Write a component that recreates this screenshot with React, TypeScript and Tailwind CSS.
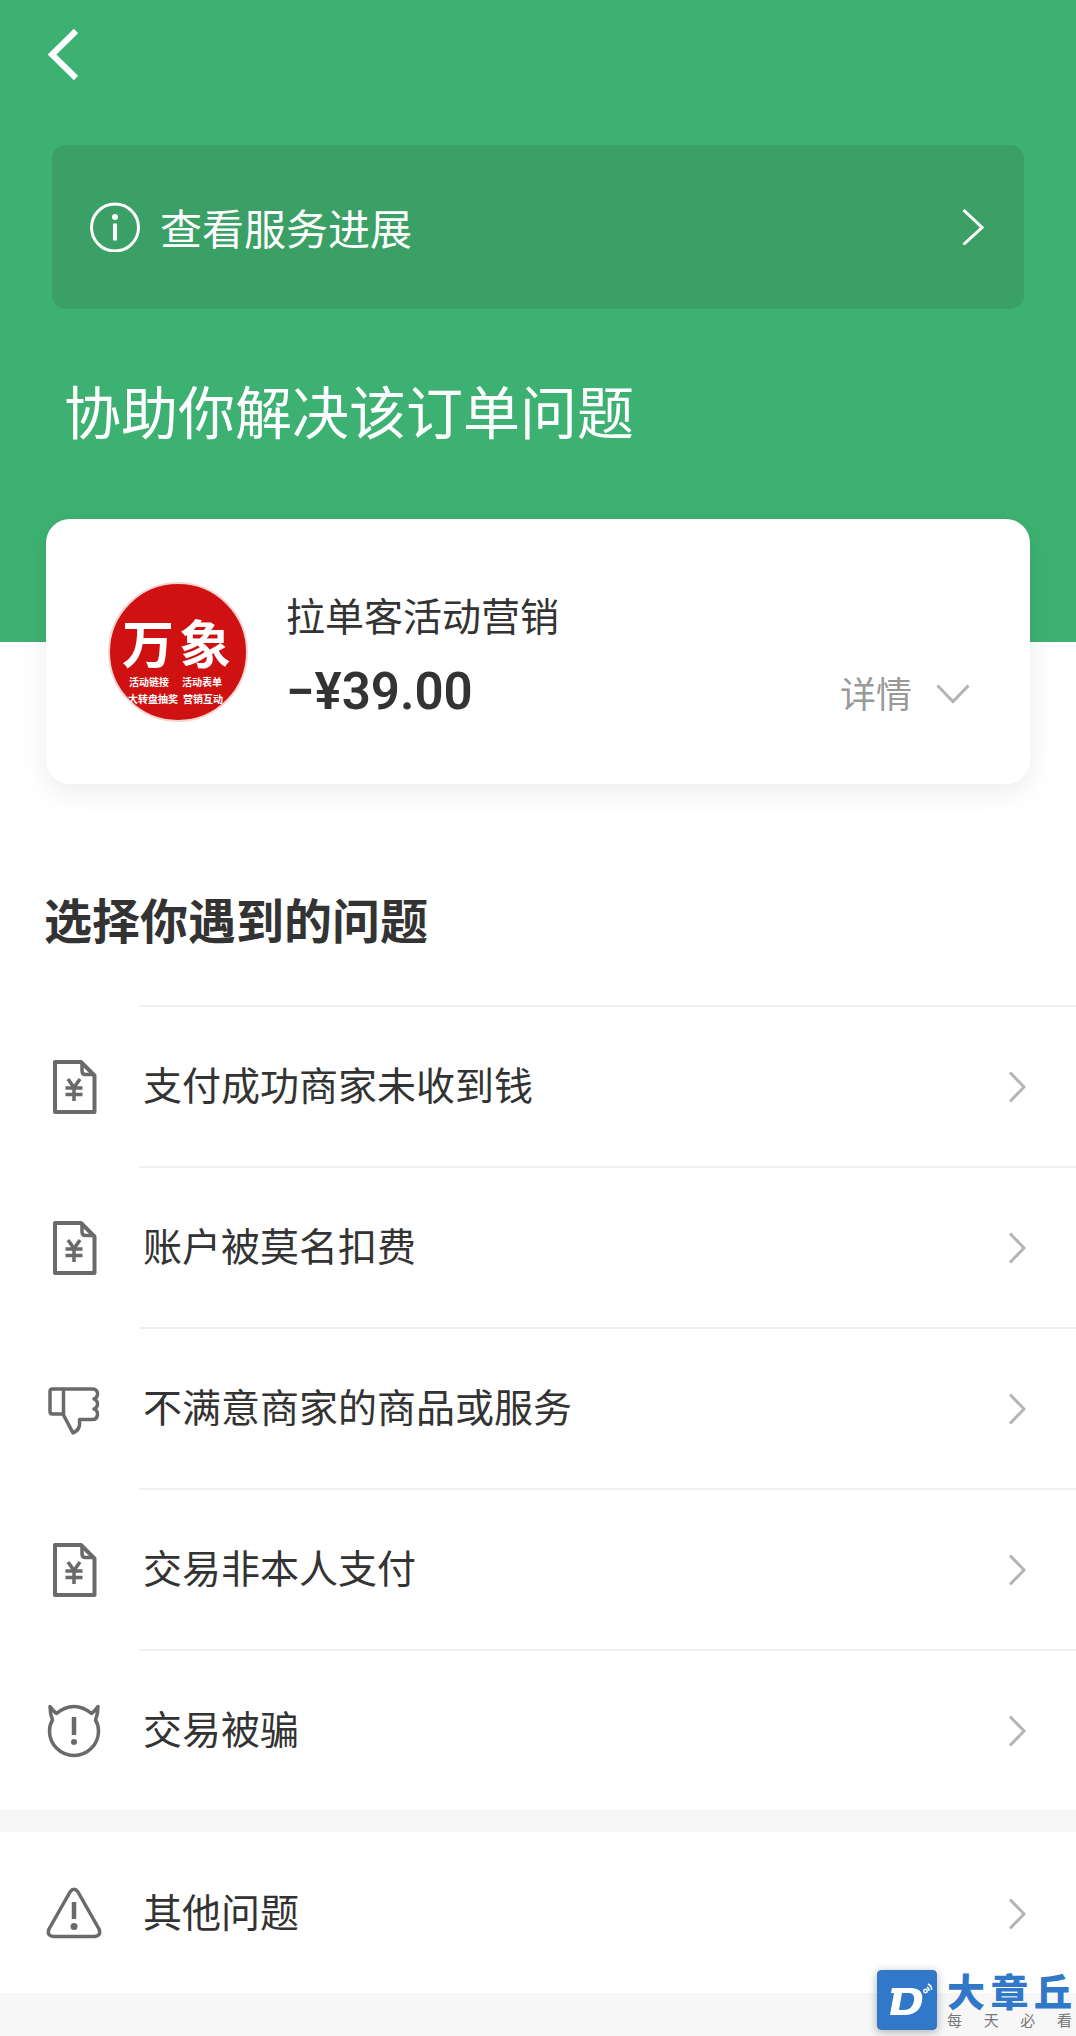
import React from "react";

type IssueIcon = "bill" | "dislike" | "devil" | "warning";

type Issue = {
  icon: IssueIcon;
  label: string;
};

type IssueRowProps = Issue & {
  divider?: boolean;
};

const issues: Issue[] = [
  { icon: "bill", label: "支付成功商家未收到钱" },
  { icon: "bill", label: "账户被莫名扣费" },
  { icon: "dislike", label: "不满意商家的商品或服务" },
  { icon: "bill", label: "交易非本人支付" },
  { icon: "devil", label: "交易被骗" },
];

function Icon({ icon }: { icon: IssueIcon }) {
  return (
    <svg
      viewBox="0 0 56 56"
      className="size-14 shrink-0"
      fill="none"
      stroke="#6a6a6a"
      strokeWidth="4"
      strokeLinejoin="round"
      aria-hidden="true"
    >
      {icon === "bill" && (
        <>
          <path d="M9 4H35L48.500 17.500V54H9V4Z" />
          <path d="M36 5V13Q36 16.500 39.500 16.500H48" strokeWidth="3.500" />
          <path
            d="M22 21L28 29.500L34 21M19.500 30H36.500M19.500 36.500H36.500M28 29V43"
            strokeWidth="3.500"
          />
        </>
      )}
      {icon === "dislike" && (
        <>
          <path
            d="M17.500 9H46.500C50 9 52 11.500 51.500 14.500C51.200 17 49.500 18.500 48 19C50.500 20 51.800 22 51.500 24.500C51.200 27 49.700 28.500 48 29C50.500 30 51.800 32 51.500 34.500C51.200 37.500 49.500 39.500 46.500 39.500H33.500C34 45 34 50 27 53L17.500 35Z"
            strokeWidth="3.500"
          />
          <path
            d="M17.500 9H6.500Q4 9 4 11.500V31.500Q4 34 6.500 34H17.500"
            strokeWidth="3.500"
          />
        </>
      )}
      {icon === "devil" && (
        <>
          <path
            d="M10.500 11.500Q19 4.500 28 4.500T45.500 11.500Q49 9 52 4.500Q52 12 49.500 18Q52.500 23 52.500 29A24.500 24.500 0 0 1 3.500 29Q3.500 23 6.500 18Q4 12 4 4.500Q7 9 10.500 11.500Z"
            strokeWidth="3.500"
          />
          <path d="M28 15V33" strokeWidth="4.500" />
          <circle cx="28" cy="40" r="3" fill="#6a6a6a" stroke="none" />
        </>
      )}
      {icon === "warning" && (
        <>
          <path
            d="M24 7Q28 1.500 32 7L53 44Q55.500 50.500 49 51.500H7Q0.500 50.500 3 44Z"
            strokeWidth="3.500"
          />
          <path d="M28 17V34" strokeWidth="4.500" />
          <circle cx="28" cy="41.500" r="3.500" fill="#6a6a6a" stroke="none" />
        </>
      )}
    </svg>
  );
}

function IssueRow({ icon, label, divider = true }: IssueRowProps) {
  return (
    <button
      type="button"
      className="flex w-full cursor-pointer items-center bg-white pl-[46px] text-left"
    >
      <Icon icon={icon} />
      <span
        className={`ml-[37px] flex h-[161px] flex-1 items-center justify-between border-t-2 pr-[50px] pl-1 ${
          divider ? "border-[#f0f0f0]" : "border-white"
        }`}
      >
        <span className="pb-2 text-[39px] leading-[56px] text-[#333]">
          {label}
        </span>
        <svg
          viewBox="0 0 18 32"
          className="h-8 w-[18px] shrink-0"
          fill="none"
          stroke="#b4b4b4"
          strokeWidth="3"
          aria-hidden="true"
        >
          <path d="M2 1.500L16 16L2 30.500" />
        </svg>
      </span>
    </button>
  );
}

function MerchantLogo() {
  return (
    <svg
      viewBox="0 0 140 140"
      className="size-[140px] shrink-0"
      fill="#fff"
      fontWeight="700"
      role="img"
      aria-label="万象"
    >
      <circle cx="70" cy="70" r="69" fill="#cf1111" stroke="#f7d4d4" strokeWidth="2" />
      <text x="14" y="82" fontSize="52">万</text>
      <text x="71" y="82" fontSize="52">象</text>
      <text x="21" y="104" fontSize="10">活动链接</text>
      <text x="74" y="104" fontSize="10">活动表单</text>
      <text x="20" y="121" fontSize="10">大转盘抽奖</text>
      <text x="75" y="121" fontSize="10">营销互动</text>
    </svg>
  );
}

function Watermark() {
  return (
    <div className="absolute right-1 bottom-[6px] flex items-center gap-[10px]">
      <svg
        viewBox="0 0 60 60"
        className="size-[60px] rounded-[4px] shadow-[0_2px_10px_rgba(0,0,0,0.3)]"
        aria-hidden="true"
      >
        <rect width="60" height="60" rx="4" fill="#3178c8" />
        <path
          fill="#fff"
          fillRule="evenodd"
          d="M15 18H35Q47 19 45 31Q43 44 29 45H13L17 23H14ZM25 23L22 40H27Q35 40 37 31Q38 23 32 23Z"
        />
        <g fill="none" stroke="#fff" strokeWidth="1.500">
          <circle cx="48.500" cy="21" r="1.700" />
          <path d="M50 17Q52 18 52 21M51 14Q55 16 54.500 20" />
        </g>
      </svg>
      <div className="w-[125px]">
        <div className="flex justify-between text-[38px] leading-[40px] font-black text-[#3178c8]">
          <span>大</span>
          <span>章</span>
          <span>丘</span>
        </div>
        <div className="flex justify-between text-[15px] leading-[20px] text-[#777]">
          <span>每</span>
          <span>天</span>
          <span>必</span>
          <span>看</span>
        </div>
      </div>
    </div>
  );
}

export default function App() {
  return (
    <div className="relative min-h-screen bg-[#f7f7f7] pb-[42px] font-['Noto_Sans_CJK_SC',sans-serif]">
      <header className="bg-[#3db172] px-[52px] pt-6 pb-[197px] text-white">
        <button
          type="button"
          aria-label="返回"
          className="-ml-2 flex h-[60px] w-12 cursor-pointer items-center"
        >
          <svg
            viewBox="0 0 36 56"
            className="h-14 w-9"
            fill="none"
            stroke="currentColor"
            strokeWidth="6"
          >
            <path d="M32 5L8 28.500L32 52" />
          </svg>
        </button>

        <button
          type="button"
          className="mt-[61px] flex h-[164px] w-full cursor-pointer items-center rounded-[14px] bg-[#3aa066] pr-10 pl-[38px]"
        >
          <svg
            viewBox="0 0 50 50"
            className="size-[50px]"
            fill="none"
            stroke="currentColor"
            strokeWidth="3"
            aria-hidden="true"
          >
            <circle cx="25" cy="25.500" r="23.500" />
            <circle cx="25" cy="15" r="3" fill="currentColor" stroke="none" />
            <path d="M25 21.500V38.500" strokeWidth="4" />
          </svg>
          <span className="ml-5 flex-1 text-left text-[42px] leading-[60px]">
            查看服务进展
          </span>
          <svg
            viewBox="0 0 22 36"
            className="h-9 w-[22px]"
            fill="none"
            stroke="currentColor"
            strokeWidth="3"
            aria-hidden="true"
          >
            <path d="M1.500 1L20 18.500L1.500 35.500" />
          </svg>
        </button>

        <h1 className="mt-[64px] ml-3 text-[57px] leading-[72px] font-normal">
          协助你解决该订单问题
        </h1>
      </header>

      <main>
        <div className="flow-root bg-white">
          <section className="relative mx-[46px] -mt-[123px] flex h-[265px] items-center rounded-3xl bg-white pr-[60px] pl-[62px] shadow-[0_8px_28px_rgba(0,0,0,0.08)]">
            <MerchantLogo />
            <div className="ml-[38px] flex-1 pt-[10px]">
              <p className="text-[39px] leading-[56px] text-[#333]">
                拉单客活动营销
              </p>
              <div className="mt-[14px] flex items-center justify-between">
                <span className="font-[Roboto,sans-serif] text-[51px] leading-[72px] font-semibold text-[#333]">
                  −¥39.00
                </span>
                <button
                  type="button"
                  className="flex cursor-pointer items-center gap-6 text-[36px] leading-[56px] text-[#999]"
                >
                  详情
                  <svg
                    viewBox="0 0 34 20"
                    className="mt-1 h-5 w-[34px]"
                    fill="none"
                    stroke="#b4b4b4"
                    strokeWidth="3"
                    aria-hidden="true"
                  >
                    <path d="M1.500 1.500L17 17.500L32.500 1.500" />
                  </svg>
                </button>
              </div>
            </div>
          </section>

          <h2 className="mt-[98px] mb-[51px] ml-11 text-[48px] leading-[72px] font-bold text-[#333]">
            选择你遇到的问题
          </h2>
        </div>

        <ul>
          {issues.map((issue) => (
            <li key={issue.label}>
              <IssueRow icon={issue.icon} label={issue.label} />
            </li>
          ))}
        </ul>

        <div className="mt-[22px]">
          <IssueRow icon="warning" label="其他问题" divider={false} />
        </div>
      </main>

      <Watermark />
    </div>
  );
}
